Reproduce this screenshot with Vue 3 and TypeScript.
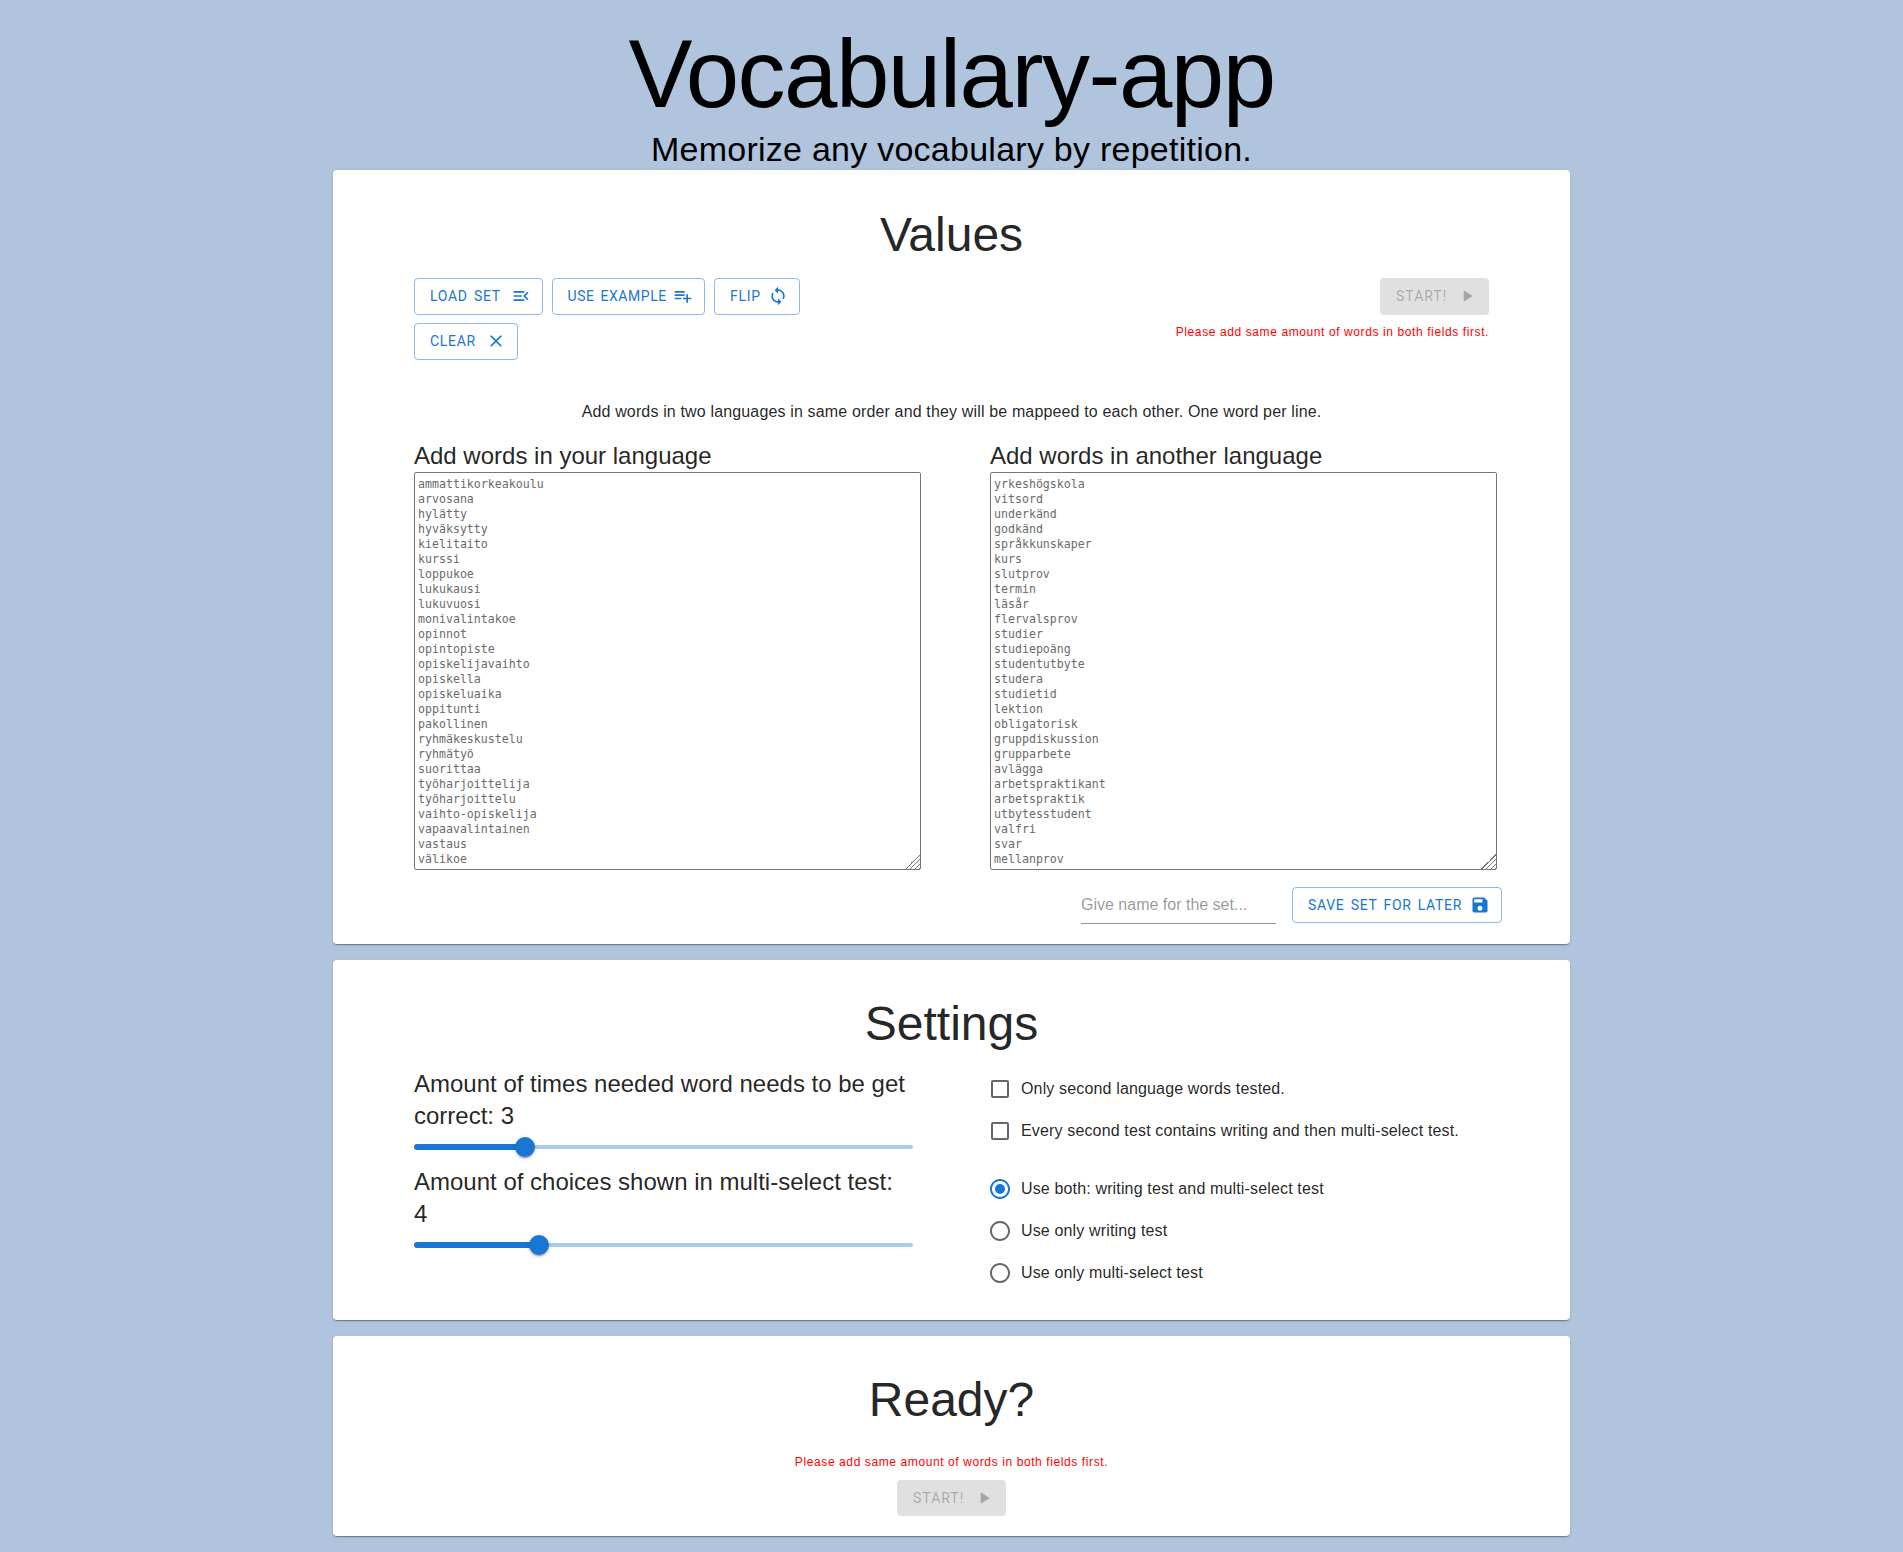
<script setup lang="ts">
interface Choice { label: string; checked?: boolean }
const icons: Record<string, string> = {
  menuOpen: 'M3 18h13v-2H3v2zm0-5h10v-2H3v2zm0-7v2h13V6H3zm18 9.59L17.42 12 21 8.41 19.59 7l-5 5 5 5L21 15.59z',
  playlistAdd: 'M14 10H2v2h12v-2zm0-4H2v2h12V6zm4 8v-4h-2v4h-4v2h4v4h2v-4h4v-2h-4zM2 16h8v-2H2v2z',
  loop: 'M12 4V1L8 5l4 4V6c3.31 0 6 2.69 6 6 0 1.01-.25 1.97-.7 2.8l1.46 1.46C19.54 15.03 20 13.57 20 12c0-4.42-3.58-8-8-8zm0 14c-3.31 0-6-2.69-6-6 0-1.01.25-1.97.7-2.8L5.24 7.74C4.46 8.97 4 10.43 4 12c0 4.42 3.58 8 8 8v3l4-4-4-4v3z',
  close: 'M19 6.41L17.59 5 12 10.59 6.41 5 5 6.41 10.59 12 5 17.59 6.41 19 12 13.41 17.59 19 19 17.59 13.41 12z',
  save: 'M17 3H5c-1.11 0-2 .9-2 2v14c0 1.1.89 2 2 2h14c1.1 0 2-.9 2-2V7l-4-4zm-5 16c-1.66 0-3-1.34-3-3s1.34-3 3-3 3 1.34 3 3-1.34 3-3 3zm3-10H5V5h10v4z',
  play: 'M8 5v14l11-7z'
}
const tools = [
  { label: 'Load set', icon: 'menuOpen', cls: 'load' },
  { label: 'Use example', icon: 'playlistAdd', cls: 'example' },
  { label: 'Flip', icon: 'loop', cls: 'flip' },
  { label: 'Clear', icon: 'close', cls: 'clear' }
]
const first = ['ammattikorkeakoulu','arvosana','hylätty','hyväksytty','kielitaito','kurssi','loppukoe','lukukausi','lukuvuosi','monivalintakoe','opinnot','opintopiste','opiskelijavaihto','opiskella','opiskeluaika','oppitunti','pakollinen','ryhmäkeskustelu','ryhmätyö','suorittaa','työharjoittelija','työharjoittelu','vaihto-opiskelija','vapaavalintainen','vastaus','välikoe'].join('\n')
const second = ['yrkeshögskola','vitsord','underkänd','godkänd','språkkunskaper','kurs','slutprov','termin','läsår','flervalsprov','studier','studiepoäng','studentutbyte','studera','studietid','lektion','obligatorisk','gruppdiskussion','grupparbete','avlägga','arbetspraktikant','arbetspraktik','utbytesstudent','valfri','svar','mellanprov'].join('\n')
const sliders = [
  { label: 'Amount of times needed word needs to be get correct: 3', pct: 22.2 },
  { label: 'Amount of choices shown in multi-select test: 4', pct: 25 }
]
const checks: Choice[] = [
  { label: 'Only second language words tested.' },
  { label: 'Every second test contains writing and then multi-select test.' }
]
const radios: Choice[] = [
  { label: 'Use both: writing test and multi-select test', checked: true },
  { label: 'Use only writing test' },
  { label: 'Use only multi-select test' }
]
const warning = 'Please add same amount of words in both fields first.'
</script>

<template>
  <div class="page">
    <header class="head">
      <h1>Vocabulary-app</h1>
      <p class="sub">Memorize any vocabulary by repetition.</p>
    </header>

    <section class="card values">
      <h2>Values</h2>
      <div class="toolbar">
        <div class="tools">
          <button v-for="t in tools" :key="t.label" class="btn" :class="t.cls" type="button">
            {{ t.label }}
            <svg viewBox="0 0 24 24"><path :d="icons[t.icon]" /></svg>
          </button>
        </div>
        <div class="start-box">
          <button class="btn filled" type="button" disabled>
            Start!
            <svg viewBox="0 0 24 24"><path :d="icons.play" /></svg>
          </button>
          <span class="warn">{{ warning }}</span>
        </div>
      </div>
      <p class="intro">Add words in two languages in same order and they will be mappeed to each other. One word per line.</p>
      <div class="cols">
        <div>
          <h3>Add words in your language</h3>
          <textarea :value="first" spellcheck="false"></textarea>
        </div>
        <div>
          <h3>Add words in another language</h3>
          <textarea :value="second" spellcheck="false"></textarea>
        </div>
      </div>
      <div class="save-row">
        <input class="name" type="text" placeholder="Give name for the set..." />
        <button class="btn save" type="button">
          Save set for later
          <svg viewBox="0 0 24 24"><path :d="icons.save" /></svg>
        </button>
      </div>
    </section>

    <section class="card">
      <h2>Settings</h2>
      <div class="cols settings">
        <div class="slider-col">
          <div v-for="s in sliders" :key="s.label" class="slider-block">
            <h3 class="slider-label">{{ s.label }}</h3>
            <div class="slider">
              <span class="rail"></span>
              <span class="fill" :style="{ width: s.pct + '%' }"></span>
              <span class="thumb" :style="{ left: s.pct + '%' }"></span>
            </div>
          </div>
        </div>
        <div class="option-col">
          <div class="group">
            <label v-for="c in checks" :key="c.label" class="opt">
              <svg viewBox="0 0 24 24"><path d="M19 5v14H5V5h14m0-2H5c-1.1 0-2 .9-2 2v14c0 1.1.9 2 2 2h14c1.1 0 2-.9 2-2V5c0-1.1-.9-2-2-2z" /></svg>
              {{ c.label }}
            </label>
          </div>
          <div class="group radios">
            <label v-for="r in radios" :key="r.label" class="opt" :class="{ on: r.checked }">
              <svg viewBox="0 0 24 24">
                <path d="M12 2C6.48 2 2 6.48 2 12s4.48 10 10 10 10-4.48 10-10S17.52 2 12 2zm0 18c-4.42 0-8-3.58-8-8s3.58-8 8-8 8 3.58 8 8-3.58 8-8 8z" />
                <circle v-if="r.checked" cx="12" cy="12" r="5" />
              </svg>
              {{ r.label }}
            </label>
          </div>
        </div>
      </div>
    </section>

    <section class="card ready">
      <h2>Ready?</h2>
      <span class="warn">{{ warning }}</span>
      <button class="btn filled" type="button" disabled>
        Start!
        <svg viewBox="0 0 24 24"><path :d="icons.play" /></svg>
      </button>
    </section>
  </div>
</template>

<style>
html, body { margin: 0; background: #b0c4de; }
</style>

<style scoped>
.page {
  width: 1237px;
  margin: 0 auto;
  padding-bottom: 16px;
  font-family: "Liberation Sans", Arial, sans-serif;
  color: rgba(0, 0, 0, 0.87);
}
.head { text-align: center; color: #000; padding-top: 18px; }
h1 { margin: 0; font-size: 96px; line-height: 112px; font-weight: 300; letter-spacing: -1.5px; }
.sub { margin: -2px 0 0; font-size: 34px; line-height: 42px; letter-spacing: 0.25px; }
.card {
  background: #fff;
  border-radius: 4px;
  box-shadow: 0 2px 1px -1px rgba(0,0,0,.2), 0 1px 1px 0 rgba(0,0,0,.14), 0 1px 3px 0 rgba(0,0,0,.12);
  padding: 36px 81px 21px;
  margin-bottom: 16px;
}
.card:last-child { margin-bottom: 0; }
h2 { margin: 0 0 16px; font-size: 48px; line-height: 56px; font-weight: 400; text-align: center; }
.values { padding-top: 37px; }
.values h2 { margin-bottom: 15px; }
h3 { margin: 0; font-size: 24px; line-height: 32px; font-weight: 400; }
.toolbar { display: flex; justify-content: space-between; align-items: flex-start; }
.tools { display: flex; flex-wrap: wrap; gap: 8.5px 9px; width: 400px; }
.btn {
  display: inline-flex;
  align-items: center;
  justify-content: space-between;
  box-sizing: border-box;
  height: 36.5px;
  padding: 0 11px 0 15px;
  border: 1px solid rgba(25, 118, 210, 0.5);
  border-radius: 4px;
  background: transparent;
  color: #1976d2;
  font-family: Roboto, sans-serif;
  font-size: 14px;
  font-weight: 400;
  letter-spacing: 0.7px;
  word-spacing: 2px;
  text-transform: uppercase;
  white-space: nowrap;
}
.load { width: 128.5px; }
.example { width: 153.5px; letter-spacing: 0.55px; }
.flip { width: 86px; }
.clear { width: 103.5px; }
.save { width: 210px; }
.btn svg { width: 20px; height: 20px; fill: currentColor; flex: none; }
.btn.filled { width: 109px; border: 0; padding: 0 12px 0 16px; background: #e0e0e0; color: rgba(0, 0, 0, 0.26); letter-spacing: 1px; }
.start-box { display: flex; flex-direction: column; align-items: flex-end; gap: 7px; }
.warn { font-size: 12px; line-height: 20px; letter-spacing: 0.6px; color: #f00; }
.intro { margin: 40px 0 16px; font-size: 16px; line-height: 24px; letter-spacing: 0.15px; text-align: center; }
.cols { display: grid; grid-template-columns: 499px 499px; column-gap: 77px; }
textarea {
  display: block;
  box-sizing: border-box;
  width: 507px;
  height: 398px;
  margin: 0;
  padding: 4px 3px 2px;
  border: 1px solid #767676;
  border-radius: 2px;
  background: #fff;
  color: #6a6a6a;
  font-family: "DejaVu Sans Mono", monospace;
  font-size: 11.6px;
  line-height: 15px;
  overflow: hidden;
  outline: none;
}
textarea::-webkit-resizer {
  background:
    linear-gradient(135deg, #fff 50%, transparent 50%),
    repeating-linear-gradient(135deg, #777 0, #777 1.2px, #fff 1.2px, #fff 3.4px);
}
.save-row { display: flex; justify-content: flex-end; align-items: flex-end; gap: 16px; margin: 17px -13px 0 0; }
.name {
  box-sizing: border-box;
  width: 195px;
  height: 32px;
  margin-bottom: -1px;
  padding: 2px 0 7px;
  border: 0;
  border-bottom: 1px solid rgba(0, 0, 0, 0.42);
  background: transparent;
  font-family: inherit;
  font-size: 16px;
  outline: none;
}
.name::placeholder { color: rgba(0, 0, 0, 0.42); opacity: 1; }
.settings { padding-bottom: 5px; }
.slider-block { height: 98px; }
.slider-label { max-width: 495px; }
.slider { position: relative; height: 28px; }
.rail, .fill { position: absolute; left: 0; border-radius: 3px; background: #1976d2; }
.rail { top: 13px; height: 4px; width: 100%; opacity: 0.38; }
.fill { top: 12px; height: 6px; }
.thumb {
  position: absolute;
  top: 5px;
  width: 20px;
  height: 20px;
  margin-left: -10px;
  border-radius: 50%;
  background: #1976d2;
  box-shadow: 0 3px 1px -2px rgba(0,0,0,.2), 0 2px 2px 0 rgba(0,0,0,.14), 0 1px 5px 0 rgba(0,0,0,.12);
}
.group { display: flex; flex-direction: column; }
.radios { margin-top: 16px; }
.opt { display: flex; align-items: center; gap: 9px; height: 42px; font-size: 16px; line-height: 24px; letter-spacing: 0.15px; }
.opt svg { width: 24px; height: 24px; margin-left: -2px; fill: rgba(0, 0, 0, 0.6); flex: none; }
.opt.on svg { fill: #1976d2; }
.ready { display: flex; flex-direction: column; align-items: center; padding-bottom: 20px; }
.ready h2 { margin-bottom: 24px; }
.ready .warn { margin-bottom: 7.5px; }
</style>
